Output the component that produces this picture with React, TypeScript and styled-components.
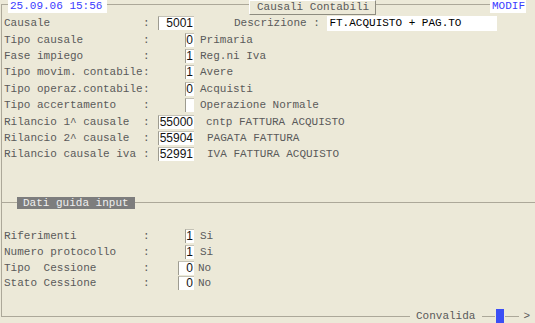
import React from "react"
import styled, { createGlobalStyle } from "styled-components"

const GlobalStyle = createGlobalStyle`
	html, body {
		margin: 0;
		padding: 0;
		background: #ece9d8;
	}
`

const LINE = "#aca899"
const BLUE = "#3b3bff"
const INK = "#5a5a5a"

type Row = {
	label: string
	value?: string
	width: number
	caption?: string
	gap?: number
}

const UPPER_ROWS: Array<Row> = [
	{ label: "Tipo causale", value: "0", width: 9, caption: "Primaria", gap: 6 },
	{ label: "Fase impiego", value: "1", width: 9, caption: "Reg.ni Iva", gap: 6 },
	{ label: "Tipo movim. contabile", value: "1", width: 9, caption: "Avere", gap: 6 },
	{ label: "Tipo operaz.contabile", value: "0", width: 9, caption: "Acquisti", gap: 6 },
	{ label: "Tipo accertamento", value: "", width: 9, caption: "Operazione Normale", gap: 6 },
	{ label: "Rilancio 1^ causale", value: "55000", width: 36, caption: "cntp FATTURA ACQUISTO", gap: 12 },
	{ label: "Rilancio 2^ causale", value: "55904", width: 36, caption: "PAGATA FATTURA", gap: 13 },
	{ label: "Rilancio causale iva", value: "52991", width: 36, caption: "IVA FATTURA ACQUISTO", gap: 13 }
]

const LOWER_ROWS: Array<Row> = [
	{ label: "Riferimenti", value: "1", width: 9, caption: "Si", gap: 6 },
	{ label: "Numero protocollo", value: "1", width: 9, caption: "Si", gap: 6 },
	{ label: "Tipo  Cessione", value: "0", width: 16, caption: "No", gap: 4 },
	{ label: "Stato Cessione", value: "0", width: 16, caption: "No", gap: 4 }
]

export default function App() {
	return (
		<Screen>
			<GlobalStyle />
			<Header>
				<Corner />
				<Stamp width={97}>25.09.06 15:56</Stamp>
				<TopLine width={142} />
				<TitleTab>Causali Contabili</TitleTab>
				<TopLine width={114} />
				<Stamp width={34}>MODIF</Stamp>
			</Header>
			<Frame>
				<Block>
					<FieldRow>
						<Label>
							<Name>Causale</Name>:
						</Label>
						<FieldSlot>
							<Field width={36}>5001</Field>
						</FieldSlot>
						<DescLabel>Descrizione : </DescLabel>
						<TextInput>FT.ACQUISTO + PAG.TO</TextInput>
					</FieldRow>
					{UPPER_ROWS.map(row => (
						<DataRow key={row.label} {...row} />
					))}
				</Block>
				<SectionRow>
					<SectionLine width={15} />
					<SectionTitle>Dati guida input</SectionTitle>
					<SectionLine />
				</SectionRow>
				<Block lower>
					{LOWER_ROWS.map(row => (
						<DataRow key={row.label} {...row} lower />
					))}
				</Block>
			</Frame>
			<Footer>
				<FootLine width={408} bordered />
				<FootText>Convalida</FootText>
				<FootLine width={13} />
				<Cursor />
				<FootLine width={14} />
				<Arrow>&gt;</Arrow>
			</Footer>
		</Screen>
	)
}

function DataRow({ label, value, width, caption, gap, lower }: Row & { lower?: boolean }) {
	return (
		<FieldRow lower={lower}>
			<Label>
				<Name>{label}</Name>:
			</Label>
			<FieldSlot>
				<Field width={width}>{value}</Field>
			</FieldSlot>
			<Caption gap={gap ?? 6}>{caption}</Caption>
		</FieldRow>
	)
}

const Screen = styled.div`
	width: 535px;
	height: 323px;
	display: flex;
	flex-direction: column;
	overflow: hidden;
	font-family: "Liberation Mono", "Courier New", monospace;
	font-size: 11px;
	color: ${INK};
`

const Header = styled.div`
	height: 15px;
	display: flex;
	align-items: flex-start;
	flex: none;
`

const Corner = styled.div`
	margin: 4px 0 0 1px;
	width: 6px;
	height: 11px;
	border-top: 1px solid ${LINE};
	border-left: 1px solid ${LINE};
`

const Stamp = styled.div<{ width: number }>`
	width: ${p => p.width}px;
	height: 13px;
	line-height: 13px;
	padding-left: 2px;
	background: #ffffff;
	color: ${BLUE};
	white-space: pre;
`

const TopLine = styled.div<{ width: number }>`
	width: ${p => p.width}px;
	margin-top: 4px;
	border-top: 1px solid ${LINE};
`

const TitleTab = styled.div`
	width: 118px;
	height: 13px;
	line-height: 13px;
	padding-left: 7px;
	border: 1px solid;
	border-color: #ffffff #8e8c80 #8e8c80 #ffffff;
	background: #ece9d8;
	white-space: pre;
`

const Frame = styled.div`
	flex: 1;
	margin-left: 1px;
	border-left: 1px solid ${LINE};
	display: flex;
	flex-direction: column;
`

const Block = styled.div<{ lower?: boolean }>`
	display: flex;
	flex-direction: column;
	padding-left: 2px;
	margin-top: ${p => (p.lower ? 20 : 0)}px;
`

const FieldRow = styled.div<{ lower?: boolean }>`
	display: flex;
	align-items: center;
	height: ${p => (p.lower ? 15.7 : 16.4)}px;
	white-space: pre;
`

const Label = styled.div`
	display: flex;
	width: 154px;
	flex: none;
`

const Name = styled.span`
	width: 139px;
`

const FieldSlot = styled.div`
	width: 36px;
	display: flex;
	justify-content: flex-end;
	flex: none;
`

const Field = styled.div<{ width: number }>`
	width: ${p => p.width}px;
	height: 14px;
	box-sizing: border-box;
	padding-right: 1px;
	background: #ffffff;
	border-left: 1px solid #9d9b90;
	border-top: 1px solid #c4c2b6;
	font-family: "Liberation Sans", Arial, sans-serif;
	font-size: 12px;
	line-height: 13px;
	color: #111111;
	text-align: right;
`

const Caption = styled.span<{ gap: number }>`
	margin-left: ${p => p.gap}px;
`

const DescLabel = styled.span`
	margin-left: 40px;
`

const TextInput = styled.div`
	width: 168px;
	height: 15px;
	line-height: 15px;
	padding-left: 2px;
	margin-left: 1px;
	background: #ffffff;
	color: #000000;
`

const SectionRow = styled.div`
	display: flex;
	align-items: center;
	height: 12px;
	margin-top: 34px;
`

const SectionLine = styled.div<{ width?: number }>`
	${p => (p.width ? `width: ${p.width}px;` : "flex: 1;")}
	border-top: 1px solid ${LINE};
`

const SectionTitle = styled.div`
	height: 12px;
	line-height: 12px;
	padding: 0 6px;
	background: #7d7d7d;
	color: #efefef;
	white-space: pre;
`

const Footer = styled.div`
	height: 14px;
	flex: none;
	display: flex;
	align-items: flex-start;
`

const FootLine = styled.div<{ width: number; bordered?: boolean }>`
	width: ${p => p.width}px;
	height: 7px;
	margin-left: ${p => (p.bordered ? 1 : 0)}px;
	border-bottom: 1px solid ${LINE};
	${p => (p.bordered ? `border-left: 1px solid ${LINE};` : "")}
`

const FootText = styled.span`
	line-height: 14px;
	padding: 0 7px 0 6px;
	white-space: pre;
`

const Cursor = styled.div`
	width: 8px;
	height: 14px;
	margin: 0 1px;
	background: #3b4ef5;
`

const Arrow = styled.span`
	line-height: 14px;
	padding-left: 4px;
`
